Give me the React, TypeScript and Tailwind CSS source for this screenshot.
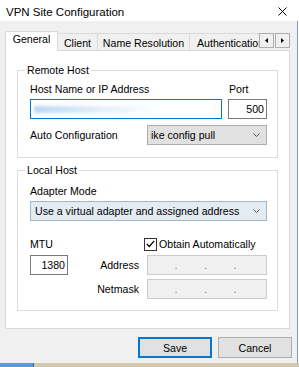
import React from 'react';

// small down chevron used by the combo boxes
function Chevron() {
  return (
    <svg width="7" height="4" viewBox="0 0 7 4" className="shrink-0">
      <path d="M0.5 0.5 L3.5 3.5 L6.5 0.5" fill="none" stroke="#505050" strokeWidth="1" />
    </svg>
  );
}

function Combo({ value, className }: { value: string; className: string }) {
  return (
    <div className={`h-[20px] flex items-center justify-between pr-[6px] border ${className}`}>
      <span className="whitespace-nowrap">{value}</span>
      <Chevron />
    </div>
  );
}

// disabled ip address field with its three separator dots
function IpField() {
  return (
    <div className="h-[20px] grid grid-cols-4 border border-[#cccccc] bg-[#f0f0f0] text-[#6d6d6d] leading-[18px]">
      <span className="text-right">.</span>
      <span className="text-right">.</span>
      <span className="text-right">.</span>
      <span />
    </div>
  );
}

function ArrowBox({ dir }: { dir: 'left' | 'right' }) {
  return (
    <div className="w-[15px] h-[15px] flex items-center justify-center bg-[#f0f0f0] border border-[#adadad]">
      <svg width="3" height="5" viewBox="0 0 3 5">
        {dir === 'left' ? <path d="M3 0 L0 2.5 L3 5 Z" fill="#000" /> : <path d="M0 0 L3 2.5 L0 5 Z" fill="#000" />}
      </svg>
    </div>
  );
}

export default function App() {
  return (
    <div className="w-[299px] h-[367px] flex flex-col bg-white overflow-hidden text-[10.6px] leading-[14px] text-black [font-family:'Liberation_Sans',Arial,sans-serif]">
      {/* Title bar */}
      <div className="h-[21px] shrink-0 flex items-center justify-between pl-[6px] pr-[12px] pt-[2px] bg-white">
        <span className="text-[11.5px]">VPN Site Configuration</span>
        <svg width="9" height="9" viewBox="0 0 9 9">
          <path d="M0.5 0.5 L8.5 8.5 M8.5 0.5 L0.5 8.5" stroke="#000" strokeWidth="1" />
        </svg>
      </div>

      {/* Dialog body */}
      <div className="flex-1 flex flex-col w-[298px] bg-[#f0f0f0] border-r border-[#6ea3d8] px-[5px] pt-[10px]">
        {/* Tabs */}
        <div className="flex items-end h-[19px] relative z-10">
          <div className="h-[20px] -mb-px w-[53px] bg-white border border-b-0 border-[#d9d9d9] text-center">General</div>
          <div className="h-[17px] w-[40px] border-t border-r border-[#d9d9d9] text-center pt-[2px]">Client</div>
          <div className="h-[17px] w-[92px] border-t border-r border-[#d9d9d9] text-center pt-[2px]">Name Resolution</div>
          <div className="h-[17px] w-[69px] border-t border-[#d9d9d9] pl-[7px] pt-[2px] whitespace-nowrap overflow-hidden">Authentication</div>
          <div className="self-start mt-[2px] flex gap-px">
            <ArrowBox dir="left" />
            <ArrowBox dir="right" />
          </div>
        </div>

        {/* Tab panel */}
        <div className="w-[285px] h-[279px] bg-white border border-[#d9d9d9] px-[11px] pt-[12px] flex flex-col">
          <fieldset className="border border-[#dcdcdc]">
            <legend className="ml-[7px] px-[2px]">Remote Host</legend>
            <div className="pl-[12px] pr-[10px] pt-[5px] pb-[12px]">
              <div className="flex gap-[6px]">
                <div className="w-[192px] flex flex-col">
                  <span>Host Name or IP Address</span>
                  <div className="mt-[3px] h-[20px] border border-[#0078d7] bg-white flex items-center pl-[3px] overflow-hidden">
                    <div className="h-[7px] w-[128px] bg-linear-to-r from-[#bcd8f3] via-[#e4eefa] to-white blur-[1.5px]" />
                  </div>
                </div>
                <div className="w-[39px] flex flex-col">
                  <span className="pl-[1px]">Port</span>
                  <div className="mt-[3px] h-[20px] border border-[#7a7a7a] bg-white text-right pr-[2px] leading-[18px]">500</div>
                </div>
              </div>
              <div className="flex items-center mt-[6px]">
                <span className="w-[117px]">Auto Configuration</span>
                <Combo value="ike config pull" className="w-[120px] pl-[3px] bg-[#e1e1e1] border-[#adadad]" />
              </div>
            </div>
          </fieldset>

          <fieldset className="mt-[5px] border border-[#dcdcdc]">
            <legend className="ml-[7px] px-[2px]">Local Host</legend>
            <div className="pl-[12px] pr-[10px] pt-[7px] pb-[11px]">
              <div>Adapter Mode</div>
              <Combo
                value="Use a virtual adapter and assigned address"
                className="mt-[3px] pl-[4px] bg-[#e3ebf3] border-[#a3b6c8]"
              />
              <div className="mt-[16px] grid grid-cols-[38px_1fr_120px] gap-x-[8px] gap-y-[4px] items-center">
                <span className="col-span-2">MTU</span>
                <label className="flex items-center gap-[2px] -ml-[3px]">
                  <span className="w-[13px] h-[13px] border border-[#333333] bg-white flex items-center justify-center">
                    <svg width="9" height="8" viewBox="0 0 9 8">
                      <path d="M0.8 4 L3.3 6.5 L8.2 0.8" fill="none" stroke="#000" strokeWidth="1.2" />
                    </svg>
                  </span>
                  <span>Obtain Automatically</span>
                </label>

                <div className="h-[20px] border border-[#7a7a7a] bg-white text-right pr-[2px] leading-[18px]">1380</div>
                <span className="text-right">Address</span>
                <IpField />

                <span />
                <span className="text-right">Netmask</span>
                <IpField />
              </div>
            </div>
          </fieldset>
        </div>

        {/* Buttons */}
        <div className="mt-[8px] flex justify-end gap-[6px]">
          <button className="w-[74px] h-[21px] border-2 border-[#0078d7] bg-[#e1e1e1]">Save</button>
          <button className="w-[74px] h-[21px] border border-[#adadad] bg-[#e1e1e1]">Cancel</button>
        </div>
      </div>

      {/* Taskbar edge showing under the window */}
      <div className="h-[4px] shrink-0 flex">
        <div className="w-[33px] bg-[#5d9ad6]" />
        <div className="w-px bg-[#35618f]" />
        <div className="flex-1 bg-[#d3c9ae]" />
      </div>
    </div>
  );
}
